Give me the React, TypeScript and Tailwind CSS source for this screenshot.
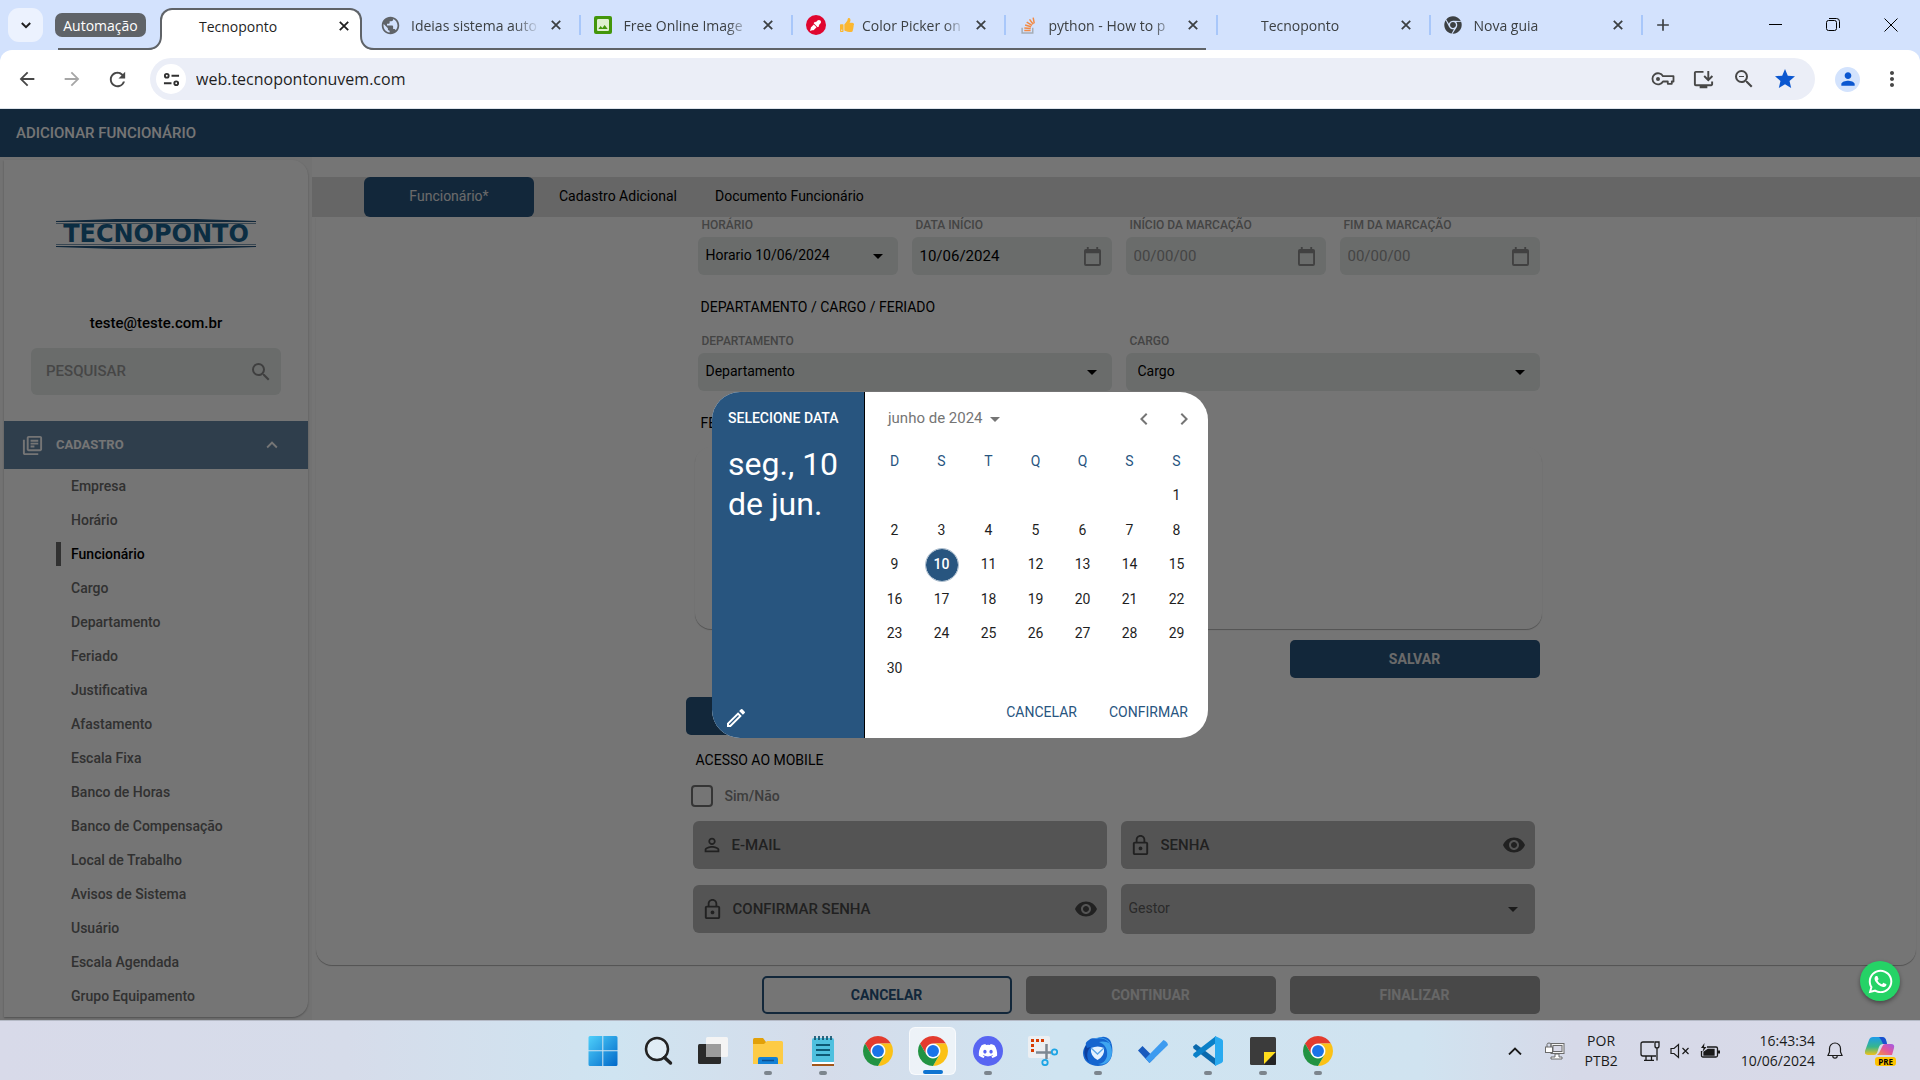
import type { ReactNode } from "react";
import {
  MdArrowBack,
  MdArrowDropDown,
  MdArrowForward,
  MdChevronLeft,
  MdChevronRight,
  MdExpandLess,
  MdImage,
  MdInstallDesktop,
  MdLockOutline,
  MdMoreVert,
  MdOutlineLibraryBooks,
  MdOutlineModeEdit,
  MdPermIdentity,
  MdPerson,
  MdPublic,
  MdRefresh,
  MdRemoveRedEye,
  MdSearch,
  MdStar,
  MdAdd,
  MdZoomOut,
} from "react-icons/md";
import { FaChrome, FaDiscord, FaEyeDropper, FaThumbsUp, FaWhatsapp } from "react-icons/fa";

/* ---------- Browser ---------- */

const backgroundTabs: { title: string; icon: ReactNode; mark?: ReactNode }[] = [
  { title: "Ideias sistema auto", icon: <MdPublic className="size-[21px] text-[#5f6368]" /> },
  {
    title: "Free Online Image",
    icon: (
      <span className="flex h-[18px] w-[18px] items-center justify-center rounded-[2px] bg-[#43960b]">
        <MdImage className="size-[16px] text-[#dff0d0]" />
      </span>
    ),
  },
  {
    title: "Color Picker on",
    icon: (
      <span className="flex size-5 items-center justify-center rounded-full bg-[#e0062f]">
        <FaEyeDropper className="size-[11px] text-white" />
      </span>
    ),
    mark: <FaThumbsUp className="ml-1 mr-2 size-[14px] shrink-0 text-[#fbb731]" />,
  },
  {
    title: "python - How to p",
    icon: (
      <svg viewBox="0 0 16 16" className="size-[17px]" fill="none">
        <path d="M2 10v5h10v-5" stroke="#a5adb6" strokeWidth="1.4" />
        <path d="M4 12.6h6M4.1 10.3l6 .6M4.8 7.6l5.7 1.6M6.3 4.8l5 3M9 2.2l3.4 4.6M12.4.6l1 5.4" stroke="#f28a45" strokeWidth="1.4" />
      </svg>
    ),
  },
  { title: "Tecnoponto", icon: null },
  { title: "Nova guia", icon: <FaChrome className="size-[18px] text-[#3c4043]" /> },
];

function CloseIcon() {
  return (
    <svg viewBox="0 0 10 10" className="size-2.5" fill="none" stroke="currentColor" strokeWidth="1.8">
      <path d="M.8.8l8.4 8.4M9.200.8.8 9.200" />
    </svg>
  );
}

function TabFoot({ className, flip }: { className: string; flip?: boolean }) {
  return (
    <svg viewBox="0 0 14 14" className={`absolute bottom-0 size-3.5 ${className}`} fill="none">
      <g transform={flip ? "translate(14 0) scale(-1 1)" : undefined}>
        <path d="M0 14C8 14 13 9 13 0H14V14Z" fill="#fff" />
        <path d="M0 13C8 13 13 8 13 0" stroke="#5f6368" strokeWidth="2" />
      </g>
    </svg>
  );
}

function TabStrip() {
  return (
    <div className="relative flex h-[50px] shrink-0 items-center bg-[#d3e2fd] text-[14px] text-[#3c4043]">
      <span className="absolute bottom-0 left-[58px] h-0.5 w-[1148px] bg-[#5f6368]" />
      <button aria-label="Pesquisar guias" className="ml-2 flex h-[34px] w-[35px] items-center justify-center rounded-[11px] bg-[#ecf2fe]">
        <svg viewBox="0 0 10 7" className="h-[7px] w-2.5 text-[#1f1f1f]" fill="none" stroke="currentColor" strokeWidth="2">
          <path d="M.8 1 5 5.200 9.200 1" />
        </svg>
      </button>
      <button className="ml-3 flex h-6 w-[91px] items-center justify-center rounded-[7px] bg-[#5f6368] text-white">Automação</button>
      <div className="relative ml-3.5 flex h-[42px] w-[202px] shrink-0 items-center self-end rounded-t-xl border-2 border-b-0 border-[#5f6368] bg-white pb-2 pl-[37px] text-[#1f1f1f]">
        <TabFoot className="-left-3.5" />
        <TabFoot className="-right-3.5" flip />
        <span className="flex-1">Tecnoponto</span>
        <button aria-label="Fechar guia" className="mr-2 flex size-4 items-center justify-center">
          <CloseIcon />
        </button>
      </div>
      <div className="ml-1.5 flex w-[1275px] min-w-0 shrink items-center">
        {backgroundTabs.map((tab, i) => (
          <div key={i} className="flex h-5 min-w-0 flex-1 items-center border-r-2 border-[#a8c7fa] pl-3">
            <span className="mr-2.5 flex w-[21px] shrink-0 justify-center">{tab.icon}</span>
            {tab.mark}
            <span className="min-w-0 flex-1 overflow-hidden whitespace-nowrap [mask-image:linear-gradient(to_right,black_80%,transparent)]">
              {tab.title}
            </span>
            <button aria-label="Fechar guia" className="ml-2 mr-[15px] flex size-4 shrink-0 items-center justify-center">
              <CloseIcon />
            </button>
          </div>
        ))}
      </div>
      <button aria-label="Nova guia" className="ml-[9px] flex size-[22px] items-center justify-center">
        <MdAdd className="size-5" />
      </button>
      <div className="ml-auto flex items-center gap-11 pr-[22px] text-black">
        <button aria-label="Minimizar">
          <svg viewBox="0 0 14 14" className="size-3.5" fill="none" stroke="currentColor"><path d="M1 6.5h13" /></svg>
        </button>
        <button aria-label="Restaurar">
          <svg viewBox="0 0 14 14" className="size-3.5" fill="none" stroke="currentColor">
            <rect x=".5" y="2.5" width="10" height="10" rx="2" />
            <path d="M3 .5h7.5a3 3 0 0 1 3 3V10" />
          </svg>
        </button>
        <button aria-label="Fechar">
          <svg viewBox="0 0 14 14" className="size-3.5" fill="none" stroke="currentColor"><path d="M.5.5l13 13M13.5.5l-13 13" /></svg>
        </button>
      </div>
    </div>
  );
}

function Toolbar() {
  return (
    <div className="shrink-0 bg-[#d3e2fd]">
      <div className="flex h-[59px] items-center rounded-t-xl border-b border-[#dde3ea] bg-white text-[#474747]">
        <div className="ml-4 flex gap-[23px]">
          <button aria-label="Voltar"><MdArrowBack className="size-[22px]" /></button>
          <button aria-label="Avançar"><MdArrowForward className="size-[22px] text-[#a6a6a6]" /></button>
          <button aria-label="Recarregar"><MdRefresh className="size-[23px]" /></button>
        </div>
        <div className="ml-[21px] flex h-[42px] flex-1 items-center rounded-full bg-[#ebeef7] pl-[6px] pr-[18px]">
          <button aria-label="Informações do site" className="flex size-[30px] shrink-0 items-center justify-center rounded-full bg-white">
            <svg viewBox="0 0 18 18" className="size-[17px]" fill="none" stroke="#303030" strokeWidth="2">
              <circle cx="4" cy="5" r="2" />
              <path d="M9 5h8M1 13h8" />
              <circle cx="14" cy="13" r="2" />
            </svg>
          </button>
          <input
            aria-label="Endereço"
            defaultValue="web.tecnopontonuvem.com"
            className="ml-2.5 min-w-0 flex-1 bg-transparent text-[16px] text-[#1f1f1f] outline-none"
          />
          <div className="flex items-center gap-[17px]">
            <button aria-label="Senhas">
              <svg viewBox="0 0 24 16" className="h-4 w-6" fill="none" stroke="currentColor" strokeWidth="1.8">
                <path d="M12 5.200H22.500V10.500H20.800V12.800H16.800V10.500H12A5.600 5.600 0 1 1 12 5.200Z" strokeLinejoin="round" />
                <circle cx="7" cy="8" r="2" fill="currentColor" stroke="none" />
              </svg>
            </button>
            <button aria-label="Instalar"><MdInstallDesktop className="size-[23px]" /></button>
            <button aria-label="Zoom"><MdZoomOut className="size-[24px]" /></button>
            <button aria-label="Favorito"><MdStar className="size-[24px] text-[#0b57d0]" /></button>
          </div>
        </div>
        <button aria-label="Perfil" className="ml-5 flex size-[25px] items-center justify-center rounded-full bg-[#d3e3fd]">
          <MdPerson className="size-5 text-[#0b57d0]" />
        </button>
        <button aria-label="Menu" className="ml-5 mr-4"><MdMoreVert className="size-6" /></button>
      </div>
    </div>
  );
}

/* ---------- Sidebar ---------- */

const menuItems = [
  "Empresa", "Horário", "Funcionário", "Cargo", "Departamento", "Feriado", "Justificativa", "Afastamento",
  "Escala Fixa", "Banco de Horas", "Banco de Compensação", "Local de Trabalho", "Avisos de Sistema",
  "Usuário", "Escala Agendada", "Grupo Equipamento",
];

function Logo() {
  return (
    <div className="flex h-[30px] w-[200px] flex-col items-center justify-between text-[#265880]">
      <svg viewBox="0 0 200 5" className="h-[5px] w-full" fill="currentColor">
        <path d="M0 2L60 0H140L200 2V3H0Z" />
        <path d="M0 4h200v1H0Z" opacity=".6" />
      </svg>
      <span className="font-['DejaVu_Sans'] text-[24px] font-bold leading-5 text-[#1a6291]">TECNOPONTO</span>
      <svg viewBox="0 0 200 5" className="h-[5px] w-full" fill="currentColor">
        <path d="M0 0h200v1H0Z" opacity=".6" />
        <path d="M0 2H200V3L140 5H60L0 3Z" />
      </svg>
    </div>
  );
}

function Sidebar() {
  return (
    <aside className="w-[312px] shrink-0 bg-[#f8f8f8] pb-[3px] pl-1 pr-1 pt-[3px]">
      <div className="flex h-full flex-col overflow-hidden rounded-r-2xl bg-white shadow-[0_1px_2px_rgba(0,0,0,0.3)]">
        <div className="mt-[59px] flex justify-center"><Logo /></div>
        <p className="mt-[64px] text-center text-[15px] font-medium leading-5 text-black">teste@teste.com.br</p>
        <div className="mx-[27px] mt-[15px] flex h-[47px] shrink-0 items-center rounded-md bg-[#e6ebe9] pl-[15px] pr-2">
          <input
            aria-label="Pesquisar"
            placeholder="PESQUISAR"
            className="min-w-0 flex-1 bg-transparent text-[15px] font-medium outline-none placeholder:text-[#9a9a9a]"
          />
          <MdSearch className="size-6 text-[#8a8a8a]" />
        </div>
        <button className="mt-[26px] flex h-12 shrink-0 items-center bg-[#6687a7] pl-[17px] pr-[25px] text-left text-white">
          <MdOutlineLibraryBooks className="size-[23px]" />
          <span className="ml-3 flex-1 text-[13px] font-bold">CADASTRO</span>
          <MdExpandLess className="size-[22px]" />
        </button>
        <nav className="flex flex-col">
          {menuItems.map((item) => (
            <a
              key={item}
              href="#"
              className={
                item === "Funcionário"
                  ? "flex h-[34px] items-center pl-[52px] text-[14px] font-medium text-black"
                  : "flex h-[34px] items-center pl-[67px] text-[14px] font-medium text-[#6b6b6b]"
              }
            >
              {item === "Funcionário" && <span className="mr-2.5 h-6 w-[5px] bg-[#6b6b6b]" />}
              {item}
            </a>
          ))}
        </nav>
      </div>
    </aside>
  );
}

/* ---------- Form ---------- */

function CalendarIcon() {
  return (
    <svg viewBox="0 0 18 20" className="h-[19px] w-[17px] text-[#8f8f8f]" fill="currentColor">
      <path d="M16 2h-1V0h-2v2H5V0H3v2H2a2 2 0 0 0-2 2v14a2 2 0 0 0 2 2h14a2 2 0 0 0 2-2V4a2 2 0 0 0-2-2Zm0 16H2V6.500h14Z" />
    </svg>
  );
}

function Label({ id, children }: { id: string; children: ReactNode }) {
  return (
    <label htmlFor={id} className="mb-1 block pl-1 text-[12px] font-medium leading-4 text-[#949494]">
      {children}
    </label>
  );
}

function SelectField({ id, label, value, className, inset = "pl-2" }: { id: string; label: string; value: string; className: string; inset?: string }) {
  return (
    <div className={className}>
      <Label id={id}>{label}</Label>
      <div className="relative">
        <select id={id} className={`h-[38px] w-full appearance-none rounded-md bg-[#e6ebe9] pb-0.5 text-[14px] text-black outline-none ${inset}`}>
          <option>{value}</option>
        </select>
        <MdArrowDropDown className="pointer-events-none absolute right-2 top-[7px] size-6 text-black" />
      </div>
    </div>
  );
}

function DateField({ id, label, value }: { id: string; label: string; value?: string }) {
  return (
    <div>
      <Label id={id}>{label}</Label>
      <div className="flex h-[38px] items-center rounded-md bg-[#e6ebe9] pl-2 pr-[11px]">
        <input
          id={id}
          defaultValue={value}
          placeholder="00/00/00"
          className="min-w-0 flex-1 bg-transparent text-[15px] text-black outline-none placeholder:text-[#969696]"
        />
        <button aria-label={`Abrir calendário: ${label}`}><CalendarIcon /></button>
      </div>
    </div>
  );
}

function AccessField({ icon, label, secret }: { icon: ReactNode; label: string; secret?: boolean }) {
  return (
    <div className="flex h-12 items-center rounded-md bg-[#b7b7b7] pl-2 pr-[9px] text-[#484848]">
      {icon}
      <input
        aria-label={label}
        placeholder={label}
        type={secret ? "password" : "email"}
        className="ml-[9px] min-w-0 flex-1 bg-transparent text-[15px] font-medium outline-none placeholder:text-[#484848]"
      />
      {secret && (
        <button aria-label="Mostrar senha"><MdRemoveRedEye className="size-6" /></button>
      )}
    </div>
  );
}

function EmployeeForm() {
  return (
    <form className="mx-auto box-content w-[856px] pr-[5px]">
      <div className="ml-3 mr-0.5 grid grid-cols-4 gap-3.5">
        <SelectField id="horario" label="HORÁRIO" value="Horario 10/06/2024" className="col-span-1" />
        <DateField id="inicio" label="DATA INÍCIO" value="10/06/2024" />
        <DateField id="marcacao-inicio" label="INÍCIO DA MARCAÇÃO" />
        <DateField id="marcacao-fim" label="FIM DA MARCAÇÃO" />
      </div>
      <h2 className="ml-[15px] mt-[22px] text-[14px] leading-5">DEPARTAMENTO / CARGO / FERIADO</h2>
      <div className="ml-3 mr-0.5 mt-4 grid grid-cols-4 gap-3.5">
        <SelectField id="departamento" label="DEPARTAMENTO" value="Departamento" className="col-span-2" />
        <SelectField id="cargo" label="CARGO" value="Cargo" className="col-span-2" inset="pl-3" />
      </div>
      <h2 className="ml-[15px] mt-[22px] text-[14px] leading-5">FERIADO</h2>
      <div className="ml-[9px] mt-3.5 h-[182px] rounded-2xl bg-white shadow-[0_1px_1px_rgba(0,0,0,0.3)]" />
      <div className="mr-0.5 mt-[11px] flex justify-end">
        <button type="button" className="h-[38px] w-[250px] rounded-[5px] bg-[#28557f] text-[14px] font-bold text-[#e8e8e8]">SALVAR</button>
      </div>
      <button type="button" aria-label="Acesso" className="mt-[19px] block h-[38px] w-[250px] rounded-[5px] bg-[#28557f]" />
      <h2 className="ml-2.5 mt-[15px] text-[14px] leading-5">ACESSO AO MOBILE</h2>
      <label className="ml-[5px] mt-[15px] flex h-[22px] w-max items-center text-[14px] font-medium text-[#858585]">
        <input type="checkbox" className="mr-3 size-[22px] appearance-none rounded border-2 border-[#757575]" />
        Sim/Não
      </label>
      <div className="mx-[7px] mt-3.5 grid grid-cols-2 items-center gap-x-3.5 gap-y-[15px]">
        <AccessField icon={<MdPermIdentity className="size-[22px]" />} label="E-MAIL" />
        <AccessField icon={<MdLockOutline className="size-[23px]" />} label="SENHA" secret />
        <AccessField icon={<MdLockOutline className="size-[23px]" />} label="CONFIRMAR SENHA" secret />
        <div className="relative">
          <select aria-label="Gestor" className="h-[50px] w-full appearance-none rounded-md bg-[#b7b7b7] pb-0.5 pl-2 text-[14px] text-[#5c5c5c] outline-none">
            <option>Gestor</option>
          </select>
          <MdArrowDropDown className="pointer-events-none absolute right-2.5 top-[13px] size-6 text-[#3c3c3c]" />
        </div>
      </div>
    </form>
  );
}

function Main() {
  return (
    <main className="flex min-w-0 flex-1 flex-col bg-white pt-5">
      <div role="tablist" className="flex h-10 shrink-0 items-center bg-[#dedede] pl-[52px] text-[14px] text-black">
        <button role="tab" aria-selected="true" className="h-10 w-[170px] rounded-md bg-[#28557f] pb-0.5 text-[#e8e8e8]">Funcionário*</button>
        <button role="tab" aria-selected="false" className="ml-[25px] pb-0.5">Cadastro Adicional</button>
        <button role="tab" aria-selected="false" className="ml-[38px] pb-0.5">Documento Funcionário</button>
      </div>
      <section className="mx-1 min-h-0 flex-1 overflow-hidden rounded-b-2xl shadow-[0_1px_1px_rgba(0,0,0,0.3)]">
        <EmployeeForm />
      </section>
      <div className="flex h-[55px] shrink-0 items-start justify-center gap-3.5 pl-[69px] pt-[11px] text-[14px] font-bold">
        <button className="h-[38px] w-[250px] rounded-[5px] border-2 border-[#28557f] text-[#28557f]">CANCELAR</button>
        <button className="h-[38px] w-[250px] rounded-[5px] bg-[#9d9d9d] text-[#e0e0e0]">CONTINUAR</button>
        <button className="h-[38px] w-[250px] rounded-[5px] bg-[#9d9d9d] text-[#e0e0e0]">FINALIZAR</button>
      </div>
    </main>
  );
}

/* ---------- Date dialog ---------- */

const weekdays = ["D", "S", "T", "Q", "Q", "S", "S"];
const days = Array.from({ length: 30 }, (_, i) => i + 1);

function DateDialog() {
  return (
    <div role="dialog" aria-label="Selecione data" className="flex h-[346px] w-[496px] overflow-hidden rounded-[28px] bg-white">
      <div className="flex w-[153px] shrink-0 flex-col border-r border-black bg-[#28557f] pl-4 text-white">
        <p className="mt-4 text-[14px] font-medium leading-5">SELECIONE DATA</p>
        <p className="mt-4 text-[32px] leading-10">seg., 10 de jun.</p>
        <button aria-label="Editar data" className="-ml-1 mb-2 mt-auto w-max"><MdOutlineModeEdit className="size-6" /></button>
      </div>
      <div className="flex min-w-0 flex-1 flex-col pl-[6px] pr-2">
        <div className="mt-[15px] flex h-6 items-center pl-[17px] text-[#757575]">
          <button className="flex items-center text-[15px]">
            junho de 2024 <MdArrowDropDown className="size-6" />
          </button>
          <button aria-label="Mês anterior" className="ml-auto"><MdChevronLeft className="size-6" /></button>
          <button aria-label="Próximo mês" className="ml-4 mr-1"><MdChevronRight className="size-6" /></button>
        </div>
        <div className="mt-3.5 grid h-[34px] grid-cols-7 place-items-center text-[14px] text-[#28557f]">
          {weekdays.map((d, i) => <span key={i}>{d}</span>)}
        </div>
        <div className="grid h-[207px] grid-cols-7 grid-rows-6 place-items-center text-[14px] text-[#1f1f1f]">
          {days.map((d) => (
            <button
              key={d}
              className={
                d === 1
                  ? "col-start-7 size-8"
                  : d === 10
                    ? "size-[34px] rounded-full border border-[#a9bbcc] bg-[#28557f] bg-clip-padding font-medium text-white"
                    : "size-8"
              }
            >
              {d}
            </button>
          ))}
        </div>
        <div className="mt-4 flex justify-end gap-8 pr-3 text-[14px] text-[#28557f]">
          <button>CANCELAR</button>
          <button>CONFIRMAR</button>
        </div>
      </div>
    </div>
  );
}

/* ---------- Taskbar ---------- */

function ChromeLogo() {
  return (
    <svg viewBox="0 0 48 48" className="size-[30px]">
      <circle cx="24" cy="24" r="12" fill="#fff" />
      <path fill="#e33b2e" d="M24 12h20.78a24 24 0 0 0-41.56 0L13.610 30A12 12 0 0 1 24 12Z" />
      <path fill="#fbc116" d="M34.390 30 24 48a24 24 0 0 0 20.780-36H24a12 12 0 0 1 10.390 18Z" />
      <path fill="#229342" d="M13.610 30 3.220 12A24 24 0 0 0 24 48l10.390-18a12 12 0 0 1-20.780 0Z" />
      <circle cx="24" cy="24" r="9.500" fill="#1a73e8" />
    </svg>
  );
}

const startIcon = (
  <svg viewBox="0 0 30 30" className="size-[30px]">
    <defs>
      <linearGradient id="win" x1="0" y1="0" x2="1" y2="1">
        <stop stopColor="#4fd0fb" /><stop offset="1" stopColor="#0068c9" />
      </linearGradient>
    </defs>
    <path fill="url(#win)" d="M2 0h12.300v14.300H.5V1.500Q.5 0 2 0ZM15.300 0H28q1.500 0 1.500 1.500v12.800H15.300ZM.5 15.300h13.800V30H2Q.5 30 .5 28.500ZM15.300 15.300h14.200v13.200q0 1.500-1.500 1.500H15.300Z" />
  </svg>
);

const searchIcon = (
  <svg viewBox="0 0 30 30" className="size-[30px]" fill="none" stroke="#222">
    <circle cx="14" cy="13" r="11" strokeWidth="2.500" fill="#fff" fillOpacity=".35" />
    <path d="M21.500 21.500 27.500 27" strokeWidth="3.400" strokeLinecap="round" />
  </svg>
);

const taskViewIcon = (
  <svg viewBox="0 0 30 30" className="size-[30px]">
    <rect x="0" y="8" width="23" height="20" rx="1.500" fill="#2a2a2a" />
    <rect x="8" y="1" width="22" height="20" rx="1.500" fill="#f4f4f4" />
    <path d="M8 8h15v13H9.500Q8 21 8 19.500Z" fill="#9c9c9c" />
  </svg>
);

const explorerIcon = (
  <svg viewBox="0 0 30 30" className="size-[30px]">
    <path d="M0 3.500Q0 2 1.500 2H10l3 4v5H0Z" fill="#e2a008" />
    <path d="M0 8h11l3-3h14.500Q30 5 30 6.500V28H0Z" fill="#fdcb45" />
    <path d="M5 28v-5q0-2 2-2h16q2 0 2 2v5Z" fill="#1381d6" />
    <path d="M9 24.500h12" stroke="#0a4f92" strokeWidth="1.500" />
  </svg>
);

const notepadIcon = (
  <svg viewBox="0 0 30 30" className="size-[30px]">
    <rect x="4" y="2" width="22" height="25" rx="2" fill="#4fc0df" />
    <path d="M7 0v4M11 0v4M15 0v4M19 0v4M23 0v4" stroke="#11526d" strokeWidth="1.700" />
    <path d="M8 9h14M8 14h14M8 19h14" stroke="#0d5875" strokeWidth="1.800" />
    <path d="M4 26h22v2H4Z" fill="#fff" />
    <path d="M4 28h22v2H4Z" fill="#a2561a" />
  </svg>
);

const discordIcon = (
  <span className="flex size-[30px] items-center justify-center rounded-full bg-[#5865f2]">
    <FaDiscord className="size-5 text-white" />
  </span>
);

const snipIcon = (
  <svg viewBox="0 0 30 30" className="size-[30px]" fill="none">
    <rect x="0" y="0" width="22" height="22" rx="2" fill="#eceff2" />
    <path d="M4.500 16V4.500H17" stroke="#d83b01" strokeWidth="3" strokeDasharray="3 2" />
    <path d="M8 16.500h15M18.500 8v15" stroke="#7d8892" strokeWidth="2.500" />
    <circle cx="26.500" cy="16" r="2.700" stroke="#1ea5e5" strokeWidth="1.800" />
    <circle cx="17" cy="26.500" r="2.700" stroke="#1ea5e5" strokeWidth="1.800" />
  </svg>
);

const thunderbirdIcon = (
  <svg viewBox="0 0 30 30" className="size-[30px]">
    <path d="M6 4C9 1 13 3 15 2s8-3 12 2c3 5 3 13 1 18-2 5-7 8-13 8C7 30 0 25 0 17c0-3 1-5 3-8-1-2 1-4 3-5Z" fill="#1565cf" />
    <path d="M11 3c6-3 13-1 17 5-5-3-9-3-12-2 6 2 9 7 8 14-1 5-5 8-9 8 8 2 14-4 14-12 0-9-7-16-18-13Z" fill="#3fa5f0" />
    <path d="M8 12q7-3 13 0 1 8-6.500 12Q7 20 8 12Z" fill="#e4f2ff" />
    <path d="M8 12l6.500 6L21 12" fill="none" stroke="#5aa5e8" strokeWidth="1.300" />
    <path d="M3 9C0 15 1 22 6 26 3 20 4 14 8 11L4 12Z" fill="#0b3f9e" />
  </svg>
);

const todoIcon = (
  <svg viewBox="0 0 30 30" className="size-[30px]">
    <path d="M0 14.500 4.500 10l12 12-5 5Z" fill="#195abd" />
    <path d="M11.500 27 7.500 22.500 25.500 4q4 2 4.500 5Z" fill="#3d9bf0" />
  </svg>
);

const vscodeIcon = (
  <svg viewBox="0 0 30 30" className="size-[30px]">
    <path d="M0 10.500 3 8l20 15v7L.5 12.500Z" fill="#0a69ad" />
    <path d="M0 19.500 3 22 23 7V0L.5 17.500Z" fill="#0a80c8" />
    <path d="M22 0l6.500 3Q30 4 30 5v20q0 1-1.500 2L22 30Z" fill="#29aaf0" />
  </svg>
);

const stickyIcon = (
  <svg viewBox="0 0 30 30" className="size-[30px]">
    <rect x="2" y="1" width="26" height="28" rx="1.500" fill="#3b3b3b" />
    <path d="M16 28V16h12Z" fill="#ffdd1c" />
    <path d="M16 29 28 16v11.500Q28 29 26.500 29Z" fill="#242424" />
  </svg>
);

const apps: { name: string; icon: ReactNode; open?: boolean; active?: boolean }[] = [
  { name: "Iniciar", icon: startIcon },
  { name: "Pesquisar", icon: searchIcon },
  { name: "Visão de tarefas", icon: taskViewIcon },
  { name: "Explorador", icon: explorerIcon, open: true },
  { name: "Bloco de notas", icon: notepadIcon, open: true },
  { name: "Chrome", icon: <ChromeLogo /> },
  { name: "Chrome ativo", icon: <ChromeLogo />, active: true },
  { name: "Discord", icon: discordIcon, open: true },
  { name: "Ferramenta de captura", icon: snipIcon },
  { name: "Thunderbird", icon: thunderbirdIcon, open: true },
  { name: "To Do", icon: todoIcon },
  { name: "VS Code", icon: vscodeIcon, open: true },
  { name: "Notas autoadesivas", icon: stickyIcon, open: true },
  { name: "Chrome 2", icon: <ChromeLogo />, open: true },
];

function Tray() {
  return (
    <div className="flex flex-1 items-center justify-end pr-[25px] text-[#1a1a1a]">
      <button aria-label="Ícones ocultos">
        <svg viewBox="0 0 14 8" className="h-2 w-3.5" fill="none" stroke="currentColor" strokeWidth="1.800"><path d="M1 7.500 7 1.500l6 6" /></svg>
      </button>
      <svg viewBox="0 0 20 18" className="ml-[23px] h-[18px] w-5" fill="none" stroke="#6b6b6b">
        <rect x="6" y="1.500" width="13" height="10" fill="#f4f4f4" />
        <rect x="8" y="3.500" width="9" height="6" fill="#d9dae8" />
        <path d="M10 12v3H6v2h11v-2h-3v-3Z" fill="#fff" />
        <path d="M2 5V2.500Q2 1 4 1t2 1.500V5" fill="none" />
        <rect x=".5" y="5" width="7" height="5.500" fill="#fff" />
      </svg>
      <button className="ml-5 text-center text-[14px] leading-5">POR<br />PTB2</button>
      <div className="ml-[22px] flex items-center gap-2.5">
        <svg viewBox="0 0 20 20" className="size-5" fill="none" stroke="currentColor" strokeWidth="1.300">
          <path d="M14 1H3Q1 1 1 3v10q0 2 2 2h13M6 15v4M11.500 15v4M4 19.300h10M15 1h4v4q0 2-2 2t-2-2ZM17 7v12.500" />
        </svg>
        <svg viewBox="0 0 20 16" className="h-4 w-5" fill="none" stroke="currentColor" strokeWidth="1.200">
          <path d="M1 5.500h3l4.500-4v13l-4.500-4H1Z" />
          <path d="M12.500 5l6 6M18.500 5l-6 6" />
        </svg>
        <svg viewBox="0 0 20 16" className="h-4 w-5" fill="none" stroke="currentColor" strokeWidth="1.300">
          <path d="M7 4h9q1.500 0 1.500 1.500v7Q17.500 14 16 14H3q-1.500 0-1.500-1.500V8" />
          <path d="M4 12V9l4-2.500h6V12Z" fill="currentColor" />
          <path d="M19 7.500v3" strokeWidth="2" />
          <path d="M4.500 0 1 5h2.500L2.500 9 6.500 4H4Z" fill="currentColor" stroke="none" />
        </svg>
      </div>
      <button className="ml-[21px] text-right text-[14px] leading-5">16:43:34<br />10/06/2024</button>
      <button aria-label="Notificações" className="ml-3">
        <svg viewBox="0 0 16 18" className="h-[18px] w-4" fill="none" stroke="currentColor" strokeWidth="1.200">
          <path d="M8 1a5.500 5.500 0 0 0-5.500 5.500V10L1 13.500h14L13.500 10V6.500A5.500 5.500 0 0 0 8 1ZM5.800 14a2.200 2.200 0 0 0 4.400 0" />
        </svg>
      </button>
      <button aria-label="Copilot" className="relative ml-[22px] size-[30px]">
        <svg viewBox="0 0 30 30" className="size-[30px]">
          <defs>
            <linearGradient id="copA" x1="0" y1="0" x2="0" y2="1">
              <stop stopColor="#1c9bea" /><stop offset=".55" stopColor="#37b68c" /><stop offset="1" stopColor="#f3c217" />
            </linearGradient>
            <linearGradient id="copB" x1="1" y1="0" x2="0" y2="1">
              <stop stopColor="#a05ae8" /><stop offset=".5" stopColor="#e2579b" /><stop offset="1" stopColor="#f59340" />
            </linearGradient>
          </defs>
          <path d="M8 1h9q3 0 4 3l1 4h-4q-3 0-4 3l-2 6q-1 2-3 2H3q-4 0-3-4L4 4q1-3 4-3Z" fill="url(#copA)" />
          <path d="M14 1h3q3 0 4 3l1 4h-4q-2-5-4-7Z" fill="#1b50cf" />
          <path d="M20 8h6q4 0 3 4l-2 7H12l2-2 3-6q1-3 3-3Z" fill="url(#copB)" />
        </svg>
        <span className="absolute -right-px bottom-0 rounded-[3px] bg-[#fdc300] px-[3px] text-[8px] font-bold leading-[9px] text-black">PRE</span>
      </button>
    </div>
  );
}

function Taskbar() {
  return (
    <footer className="flex h-[60px] shrink-0 items-center border-t border-[#b5bac6] bg-[linear-gradient(to_right,#d8dae9_0%,#d6dcea_18%,#cfe4f1_32%,#d5dcea_43%,#cfe4f1_55%,#d0e3f0_74%,#d6d9e8_82%,#d9dae8_100%)]">
      <div className="flex-1 pl-[25px]" />
      <div className="flex">
        {apps.map((app) => (
          <button key={app.name} aria-label={app.name} className="flex w-[55px] justify-center">
            <span
              className={
                app.active
                  ? "relative flex h-12 w-[47px] items-center justify-center rounded-md border border-white/60 bg-white/60"
                  : "relative flex h-12 w-[47px] items-center justify-center"
              }
            >
              {app.icon}
              {app.active && <span className="absolute bottom-0 h-1 w-5 rounded-full bg-[#0f74d1]" />}
              {app.open && <span className="absolute bottom-0 h-1 w-2 rounded-full bg-[#7c858d]" />}
            </span>
          </button>
        ))}
      </div>
      <Tray />
    </footer>
  );
}

export default function App() {
  return (
    <div className="flex h-screen flex-col overflow-hidden font-['Open_Sans',sans-serif]">
      <TabStrip />
      <Toolbar />
      <div className="relative flex min-h-0 flex-1 flex-col font-[Roboto,sans-serif] text-black">
        <header className="flex h-12 shrink-0 items-center bg-[#28557f] pl-4">
          <h1 className="text-[15px] font-medium text-white">ADICIONAR FUNCIONÁRIO</h1>
        </header>
        <div className="flex min-h-0 flex-1">
          <Sidebar />
          <Main />
        </div>
        <div className="absolute inset-0 flex items-center justify-center bg-black/54">
          <DateDialog />
        </div>
        <button
          aria-label="WhatsApp"
          className="absolute bottom-[19px] right-5 flex size-10 items-center justify-center rounded-full bg-[#25d366] shadow-[0_2px_4px_rgba(0,0,0,0.4)]"
        >
          <FaWhatsapp className="size-[27px] text-white" />
        </button>
      </div>
      <Taskbar />
    </div>
  );
}
